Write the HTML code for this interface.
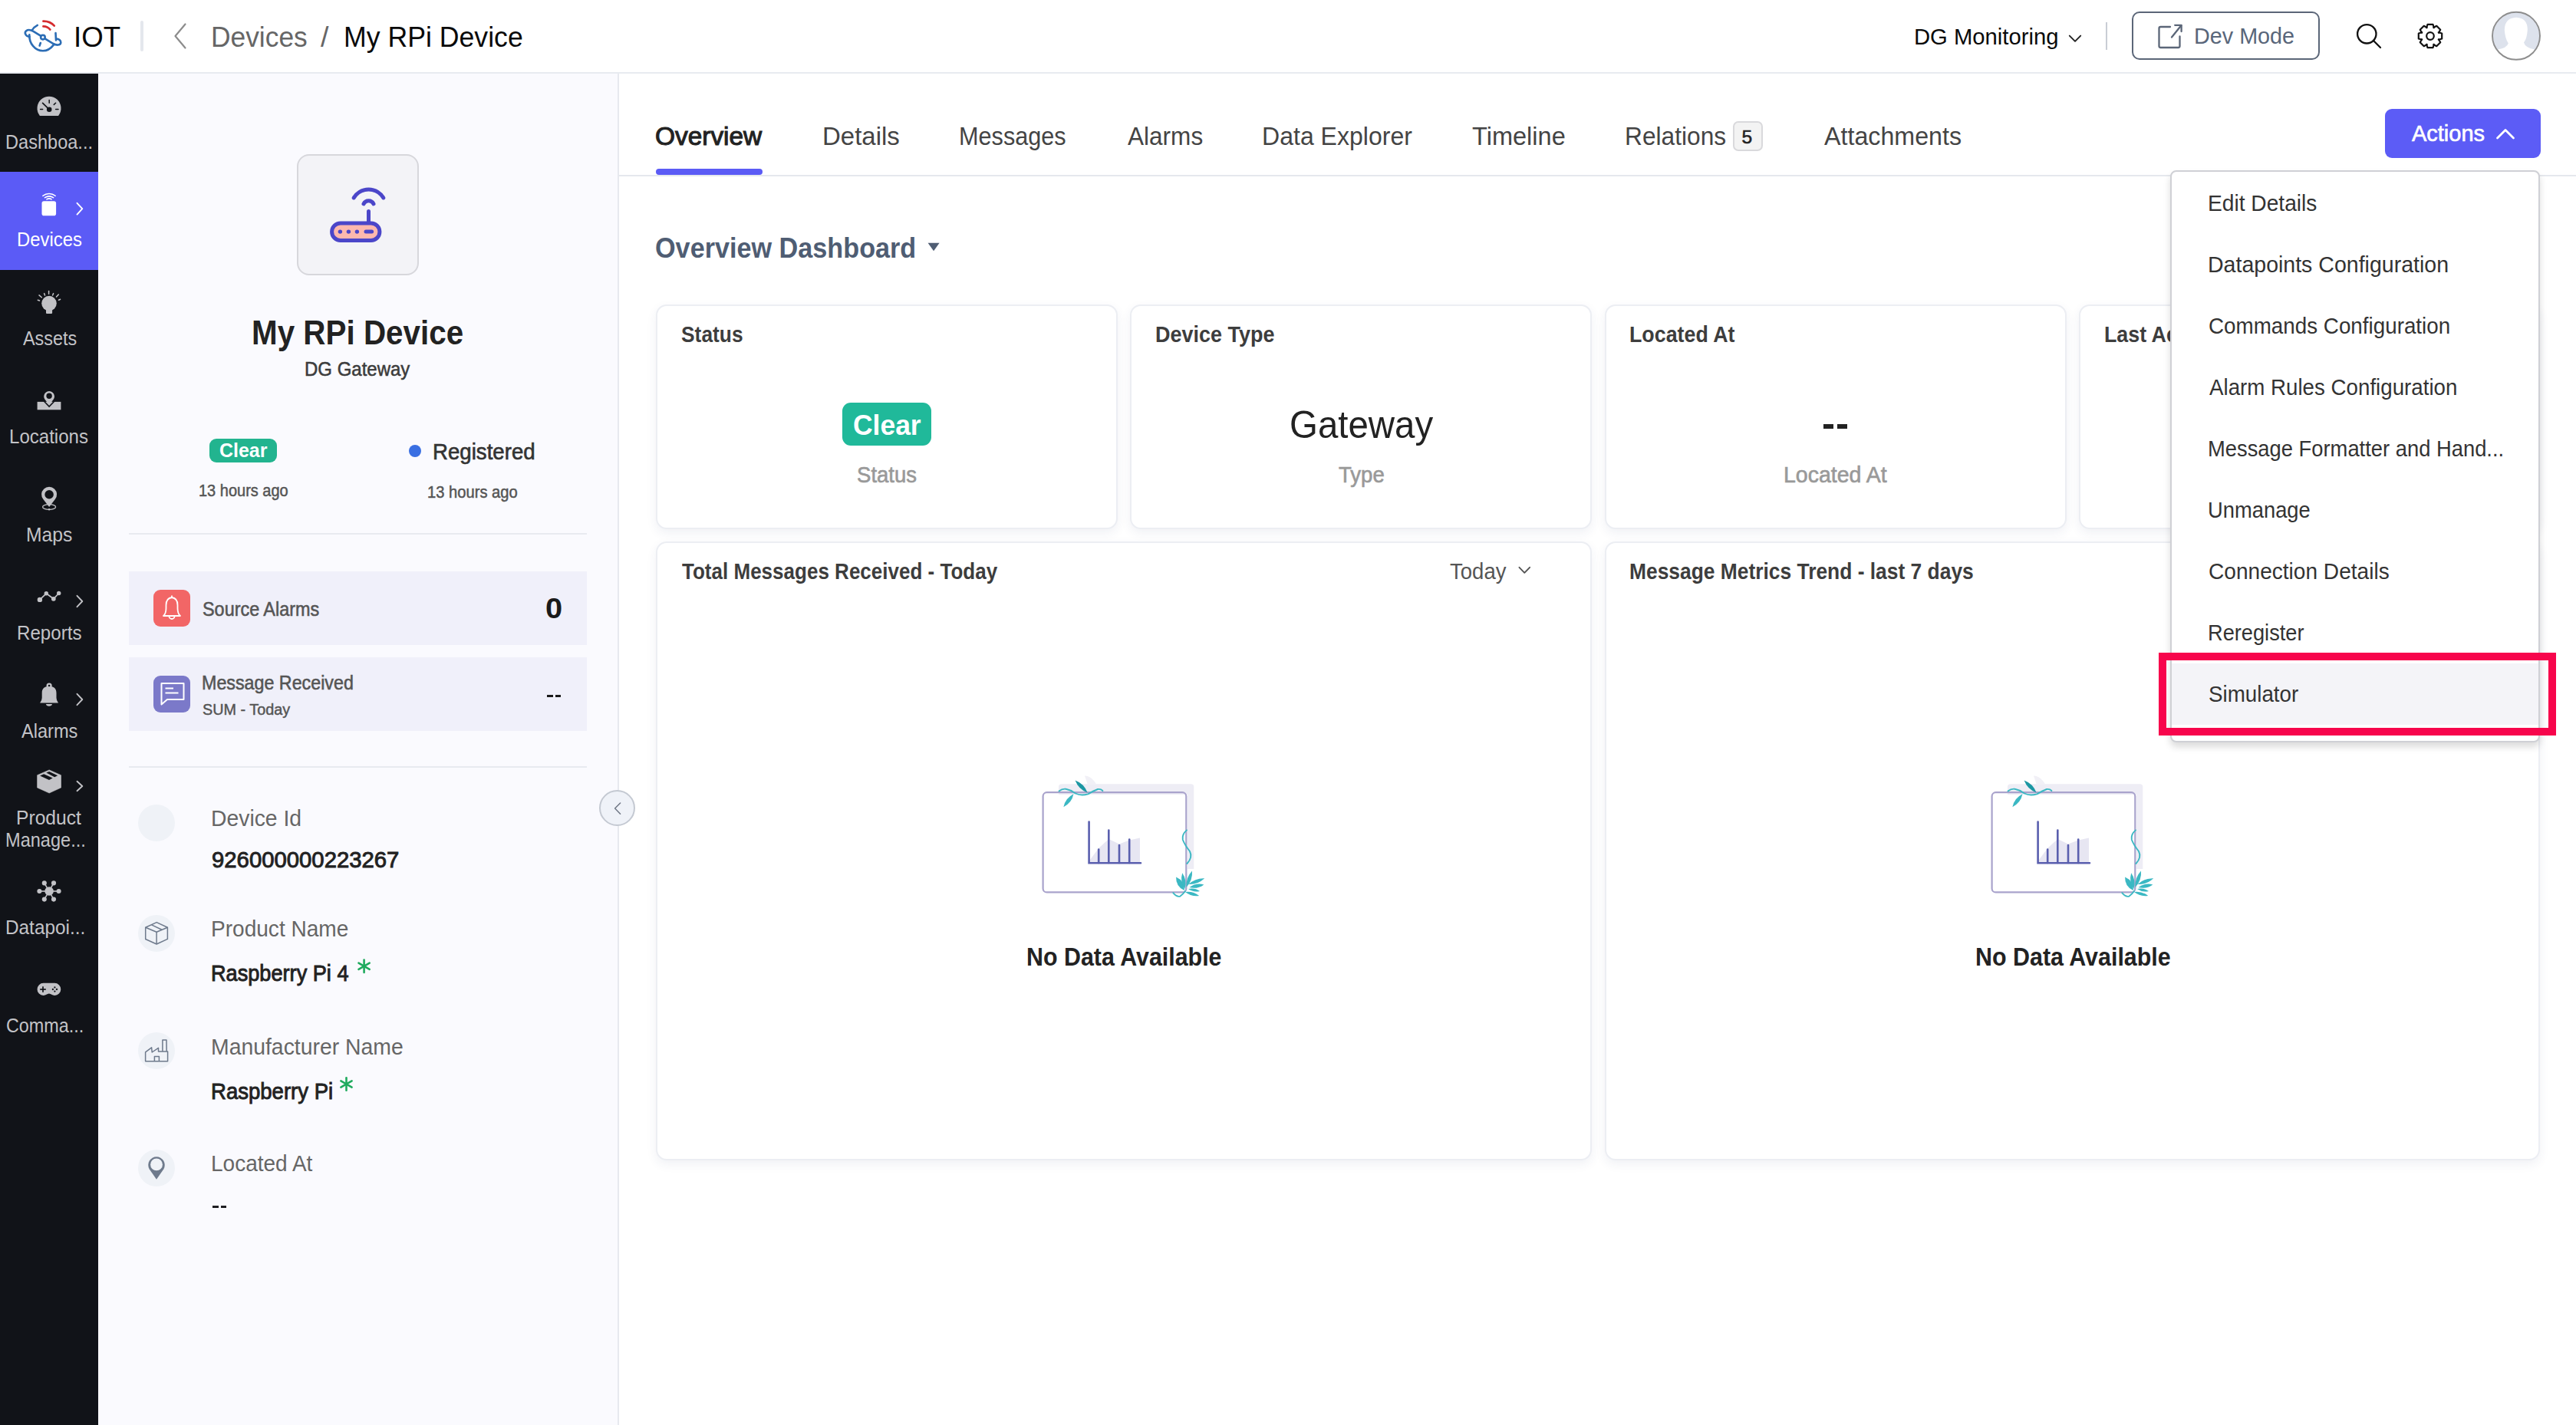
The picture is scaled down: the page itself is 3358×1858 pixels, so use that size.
<!DOCTYPE html><html><head><meta charset="utf-8"><title>IOT - My RPi Device</title><style>
html,body{margin:0;padding:0;}
body{width:3358px;height:1858px;overflow:hidden;position:relative;background:#ffffff;font-family:'Liberation Sans', sans-serif;}
.t{position:absolute;white-space:nowrap;transform-origin:0 0;}
svg{overflow:visible}
</style></head><body>
<div style="position:absolute;left:0px;top:0px;width:3358px;height:94px;background:#ffffff;"></div>
<div style="position:absolute;left:0px;top:94px;width:3358px;height:2px;background:#e8ebf0;"></div>
<div style="position:absolute;left:0px;top:96px;width:128px;height:1762px;background:#111318;"></div>
<div style="position:absolute;left:0px;top:224px;width:128px;height:128px;background:#5b5bf6;"></div>
<div style="position:absolute;left:128px;top:96px;width:677px;height:1762px;background:#fafafe;"></div>
<div style="position:absolute;left:805px;top:96px;width:2px;height:1762px;background:#e7e9ef;"></div>
<div style="position:absolute;left:807px;top:228px;width:2551px;height:2px;background:#e5e8ed;"></div>
<div style="position:absolute;left:855px;top:220px;width:139px;height:8px;background:#5b5bf5;border-radius:4px;"></div>
<svg style="position:absolute;left:25px;top:20px;" width="65" height="55" viewBox="25 20 65 55"><g fill="none" stroke="#2c6db5" stroke-width="2.6" stroke-linecap="round" stroke-linejoin="round">
<path d="M38.3 45.2 C37.8 57 46 66.3 55.9 66.3 C62 66.3 66.8 62.6 70 58.4"/>
<path d="M38.6 48 C33.2 47.3 31.3 42.6 34.2 40.2 C36.6 38.3 40.5 39.2 43.5 40.8 L53.3 46.9"/>
<path d="M58.6 50.4 L68.8 56.6 C73.2 59.2 78.8 59.6 79.3 55.6 C79.6 52.8 76.6 50.6 73.6 50.6"/>
<path d="M72.5 43 L73 52.4"/>
<circle cx="55.9" cy="48.6" r="2.8"/>
<path d="M41.6 39.6 Q44.3 35.2 48.8 32.9"/>
<path d="M51.6 59.6 L52.8 56"/>
</g>
<g fill="none" stroke="#d52b2e" stroke-width="2.6" stroke-linecap="round">
<path d="M56.4 27.6 Q65.2 27.4 70.8 33.6"/>
<path d="M56.4 34.4 Q61.8 34.2 65.4 38.6"/>
</g></svg>
<div style="position:absolute;left:183px;top:27px;width:4px;height:40px;background:#e4e7ed;border-radius:2px;"></div>
<svg style="position:absolute;left:220px;top:25px;" width="30" height="45" viewBox="220 25 30 45"><path d="M241.5 31.5 L228.5 47 L241.5 62.5" fill="none" stroke="#8c8c8c" stroke-width="2.2" stroke-linecap="round" stroke-linejoin="round"/></svg>
<svg style="position:absolute;left:2690px;top:40px;" width="30" height="20" viewBox="2690 40 30 20"><path d="M2697.8 46.6 L2705 53.8 L2712.2 46.6" fill="none" stroke="#222" stroke-width="1.9" stroke-linecap="round" stroke-linejoin="round"/></svg>
<div style="position:absolute;left:2745px;top:29px;width:2px;height:36px;background:#c9cdd5;"></div>
<div style="position:absolute;left:2779px;top:15px;width:245px;height:63px;box-sizing:border-box;border:2.5px solid #5b6678;border-radius:10px;"></div>
<svg style="position:absolute;left:2808px;top:28px;" width="42" height="40" viewBox="2808 28 42 40"><g fill="none" stroke="#5b6678" stroke-width="2.3" stroke-linecap="round" stroke-linejoin="round">
<path d="M2829 35 L2816.5 35 Q2814.5 35 2814.5 37 L2814.5 60 Q2814.5 62 2816.5 62 L2839.5 62 Q2841.5 62 2841.5 60 L2841.5 47.5"/>
<path d="M2831 48.5 L2843.3 33.2"/><path d="M2835.2 32.8 L2843.6 32.8 L2843.6 41"/></g></svg>
<svg style="position:absolute;left:3066px;top:26px;" width="44" height="42" viewBox="3066 26 44 42"><g fill="none" stroke="#111" stroke-width="2.3" stroke-linecap="round"><circle cx="3085.3" cy="44.3" r="12.2"/><path d="M3094 53 L3103 62"/></g></svg>
<svg style="position:absolute;left:3148px;top:27px;" width="40" height="41" viewBox="3148 27 40 41"><g fill="none" stroke="#111" stroke-width="2.2" stroke-linejoin="round"><path d="M3163.20 36.22 L3164.49 31.80 L3171.51 31.80 L3172.80 36.22 L3172.23 35.98 L3176.27 33.77 L3181.23 38.73 L3179.02 42.77 L3178.78 42.20 L3183.20 43.49 L3183.20 50.51 L3178.78 51.80 L3179.02 51.23 L3181.23 55.27 L3176.27 60.23 L3172.23 58.02 L3172.80 57.78 L3171.51 62.20 L3164.49 62.20 L3163.20 57.78 L3163.77 58.02 L3159.73 60.23 L3154.77 55.27 L3156.98 51.23 L3157.22 51.80 L3152.80 50.51 L3152.80 43.49 L3157.22 42.20 L3156.98 42.77 L3154.77 38.73 L3159.73 33.77 L3163.77 35.98 Z"/><circle cx="3168" cy="47" r="4.8"/></g></svg>
<svg style="position:absolute;left:3245px;top:12px;" width="72" height="70" viewBox="3245 12 72 70"><defs><clipPath id="avc"><circle cx="3280" cy="46.8" r="30.6"/></clipPath></defs>
<circle cx="3280" cy="46.8" r="31" fill="#dde2ec"/>
<g clip-path="url(#avc)"><path d="M3245 67 L3256 64.5 Q3268 62.5 3269.8 56.5 Q3265.5 50 3264.8 39 Q3265 23.5 3280 22.8 Q3295 23.5 3294.8 39 Q3294.2 50 3290 55.5 Q3292 62.5 3305 64.8 L3318 67 L3318 84 L3245 84 Z" fill="#ffffff"/></g>
<circle cx="3280" cy="46.8" r="31" fill="none" stroke="#8d8d8d" stroke-width="1.9"/></svg>
<svg style="position:absolute;left:46px;top:122px;" width="36" height="32" viewBox="46 122 36 32"><path d="M51.9 150.9 A15.5 15.5 0 1 1 76.1 150.9 Z" fill="#c2c2c6"/>
<g stroke="#111318" stroke-width="1.5" stroke-linecap="round"><path d="M52.6 142.6 L55.6 142.6"/><path d="M72.6 142.6 L76 142.6"/><path d="M64.2 130.6 L64.2 134.2"/><path d="M70.3 136.4 L72.6 134.2"/><path d="M55.6 134.4 L63.8 142.4" stroke-width="1.7"/></g>
<circle cx="64.2" cy="142.8" r="3.3" fill="#111318"/></svg>
<svg style="position:absolute;left:50px;top:248px;" width="30" height="36" viewBox="50 248 30 36"><g fill="none" stroke="#fff" stroke-width="1.6" stroke-linecap="round"><path d="M55.9 255.3 A13 13 0 0 1 72.1 255.3"/><path d="M58.5 257.7 A9.8 9.8 0 0 1 69.5 257.7"/><path d="M60.9 259.9 A5.6 5.6 0 0 1 67.1 259.9"/></g>
<rect x="54.5" y="262.2" width="18.6" height="19" rx="2.8" fill="#fff"/></svg>
<svg style="position:absolute;left:96px;top:260px;" width="16" height="24" viewBox="96 260 16 24"><path d="M100.5 264.8 L107.3 272.2 L100.5 279.6" fill="none" stroke="#fff" stroke-width="1.9" stroke-linecap="round" stroke-linejoin="round"/></svg>
<svg style="position:absolute;left:44px;top:372px;" width="40" height="40" viewBox="44 372 40 40"><circle cx="64" cy="395.6" r="9.8" fill="#c2c2c6"/><rect x="60" y="400" width="8.1" height="8.9" rx="0.8" fill="#c2c2c6"/>
<g stroke="#c2c2c6" stroke-width="1.5" stroke-linecap="round"><path d="M63.6 379.6 L63.6 383.2"/><path d="M57.6 382.6 L58.5 385"/><path d="M69.6 382.6 L68.6 385"/><path d="M51 384.9 L54.3 387.8"/><path d="M76.3 384 L73.5 387"/><path d="M49.3 391.2 L51.5 392"/><path d="M78.6 390.3 L76.5 391.3"/></g></svg>
<svg style="position:absolute;left:46px;top:506px;" width="36" height="32" viewBox="46 506 36 32"><rect x="48.6" y="523.9" width="30.8" height="10.4" fill="#c2c2c6"/>
<path d="M57.2 523 L64.1 530 L71 523" fill="none" stroke="#111318" stroke-width="1.6"/>
<path d="M64.1 527.9 L58.3 520.6 A6.85 6.85 0 1 1 69.9 520.6 Z" fill="#c2c2c6"/><circle cx="64.1" cy="516.2" r="3.7" fill="#111318"/></svg>
<svg style="position:absolute;left:50px;top:630px;" width="30" height="40" viewBox="50 630 30 40"><ellipse cx="64.1" cy="661" rx="8.5" ry="3.3" fill="none" stroke="#c2c2c6" stroke-width="1.3"/>
<path d="M64.1 660.9 L56.4 651.1 A10 10 0 1 1 71.8 651.1 Z" fill="#c2c2c6"/><circle cx="64.1" cy="644.7" r="5.75" fill="#111318"/><circle cx="64.1" cy="664.2" r="1.3" fill="#c2c2c6"/></svg>
<svg style="position:absolute;left:46px;top:766px;" width="36" height="24" viewBox="46 766 36 24"><path d="M51.9 781.9 L60.3 773.8 L69.8 780.8 L76.7 773.5" fill="none" stroke="#c2c2c6" stroke-width="1.7" stroke-linejoin="round"/>
<g fill="#c2c2c6"><circle cx="51.9" cy="781.9" r="3.2"/><circle cx="60.3" cy="773.8" r="2.7"/><circle cx="69.8" cy="780.8" r="2.9"/><circle cx="76.7" cy="773.5" r="2.7"/></g></svg>
<svg style="position:absolute;left:96px;top:772px;" width="16" height="24" viewBox="96 772 16 24"><path d="M100.5 776.8 L107.3 784.0 L100.5 791.2" fill="none" stroke="#c2c2c6" stroke-width="1.9" stroke-linecap="round" stroke-linejoin="round"/></svg>
<svg style="position:absolute;left:48px;top:886px;" width="32" height="38" viewBox="48 886 32 38"><path d="M52.1 916.5 Q54.7 913 54.7 910 L54.7 903.5 C54.7 897.5 58.5 894.8 64.1 894.8 C69.7 894.8 73.5 897.5 73.5 903.5 L73.5 910 Q73.5 913 76 916.5 Z" fill="#c2c2c6"/>
<circle cx="64.1" cy="894" r="3.6" fill="#c2c2c6"/><circle cx="64.1" cy="894" r="1.3" fill="#111318"/><path d="M59.9 918.1 A4.1 3.2 0 0 0 68 918.1 Z" fill="#c2c2c6"/></svg>
<svg style="position:absolute;left:96px;top:900px;" width="16" height="24" viewBox="96 900 16 24"><path d="M100.5 904.8 L107.3 912.0 L100.5 919.2" fill="none" stroke="#c2c2c6" stroke-width="1.9" stroke-linecap="round" stroke-linejoin="round"/></svg>
<svg style="position:absolute;left:46px;top:1000px;" width="36" height="38" viewBox="46 1000 36 38"><path d="M64.2 1003.9 L79.5 1010.7 L79.5 1027 L64.2 1034 L48.6 1027 L48.6 1010.7 Z" fill="#c2c2c6" stroke="#c2c2c6" stroke-width="0.6" stroke-linejoin="round"/>
<path d="M52.1 1011.5 L57.2 1009.3 L68.7 1014.5 L64 1016.9 Z" fill="#111318"/><path d="M60.3 1007.4 L64.2 1005.9 L75.2 1011.2 L71.2 1013.2 Z" fill="#111318"/></svg>
<svg style="position:absolute;left:96px;top:1014px;" width="16" height="22" viewBox="96 1014 16 22"><path d="M100.5 1018.8 L107.3 1025.0 L100.5 1031.2" fill="none" stroke="#c2c2c6" stroke-width="1.9" stroke-linecap="round" stroke-linejoin="round"/></svg>
<svg style="position:absolute;left:46px;top:1144px;" width="36" height="36" viewBox="46 1144 36 36"><g stroke="#c2c2c6" stroke-width="1.6"><path d="M51.4 1162 L76.6 1162"/><path d="M57.8 1151.4 L70 1172.6"/><path d="M70 1151.4 L57.8 1172.6"/></g>
<g fill="#c2c2c6"><circle cx="64.1" cy="1162" r="5.8"/><circle cx="51.4" cy="1162" r="3.05"/><circle cx="76.6" cy="1162" r="3.05"/><circle cx="57.8" cy="1151.4" r="3.05"/><circle cx="70" cy="1151.4" r="3.05"/><circle cx="57.8" cy="1172.6" r="3.05"/><circle cx="70" cy="1172.6" r="3.05"/></g></svg>
<svg style="position:absolute;left:46px;top:1278px;" width="36" height="24" viewBox="46 1278 36 24"><path d="M56.6 1281.8 L71.2 1281.8 A8.1 8.1 0 0 1 71.2 1298 C68 1298 66.5 1295.5 63.9 1295.5 C61.3 1295.5 59.8 1298 56.6 1298 A8.1 8.1 0 0 1 56.6 1281.8 Z" fill="#c2c2c6"/>
<g stroke="#111318" stroke-width="1.7"><path d="M52.2 1290 L59.8 1290"/><path d="M56 1286.2 L56 1293.8"/></g>
<g fill="#111318"><circle cx="71.4" cy="1287.4" r="1.15"/><circle cx="71.4" cy="1292.6" r="1.15"/><circle cx="68.9" cy="1290" r="1.15"/><circle cx="74" cy="1290" r="1.15"/></g></svg>
<div style="position:absolute;left:387px;top:201px;width:159px;height:158px;box-sizing:border-box;background:#f3f3f7;border:2px solid #d7d7dc;border-radius:16px;"></div>
<svg style="position:absolute;left:425px;top:230px;" width="80" height="90" viewBox="425 230 80 90"><g fill="none" stroke="#4b46c9" stroke-width="5" stroke-linecap="round">
<rect x="432.6" y="290.9" width="62.3" height="22.5" rx="11.2" fill="#fdb8ae"/>
<path d="M480.5 275.6 L480.5 290"/><path d="M474 265.8 A7.2 7.2 0 0 1 487 265.8"/><path d="M461.2 258 A22.4 22.4 0 0 1 499.8 258"/>
<path d="M477 302.1 L484.6 302.1"/></g>
<g fill="#4b46c9"><circle cx="443.4" cy="302.1" r="2.7"/><circle cx="454.4" cy="302.1" r="2.7"/><circle cx="465.4" cy="302.1" r="2.7"/></g></svg>
<div style="position:absolute;left:273px;top:572px;width:88px;height:31px;background:#22b48f;border-radius:9px;"></div>
<div style="position:absolute;left:533px;top:580px;width:16px;height:16px;border-radius:50%;background:#3a6fe2;"></div>
<div style="position:absolute;left:168px;top:695px;width:597px;height:2px;background:#e8eaf0;"></div>
<div style="position:absolute;left:168px;top:745px;width:597px;height:96px;background:#f0f0fa;"></div>
<div style="position:absolute;left:200px;top:769px;width:48px;height:48px;background:#f26666;border-radius:9px;"></div>
<svg style="position:absolute;left:205px;top:773px;" width="40" height="42" viewBox="205 773 40 42"><g fill="none" stroke="#fff" stroke-width="1.8" stroke-linejoin="round"><path d="M213 803 Q216.5 800 216.5 793 L216.5 789 Q216.5 780 224 779 Q231.5 780 231.5 789 L231.5 793 Q231.5 800 235 803 Z"/><path d="M220.5 803.5 A3.5 3.5 0 0 0 227.5 803.5"/><path d="M224 776.5 L224 779"/></g></svg>
<div style="position:absolute;left:168px;top:857px;width:597px;height:96px;background:#f0f0fa;"></div>
<div style="position:absolute;left:200px;top:881px;width:48px;height:48px;background:#7b79c9;border-radius:9px;"></div>
<svg style="position:absolute;left:205px;top:885px;" width="40" height="42" viewBox="205 885 40 42"><g fill="none" stroke="#fff" stroke-width="2" stroke-linejoin="round"><path d="M210.5 891 L239.5 891 L239.5 912 L218 912 L210.5 918.5 Z"/></g>
<g stroke="#fff" stroke-width="2"><path d="M215.5 897.5 L226 897.5"/><path d="M215.5 903.5 L232.5 903.5"/></g></svg>
<div style="position:absolute;left:713px;top:906px;width:7.600000000000023px;height:3px;background:#1a1a1a;"></div>
<div style="position:absolute;left:724px;top:906px;width:7px;height:3px;background:#1a1a1a;"></div>
<div style="position:absolute;left:168px;top:999px;width:597px;height:2px;background:#e8eaf0;"></div>
<div style="position:absolute;left:180px;top:1049px;width:48px;height:48px;border-radius:50%;background:#eff2f7;"></div>
<div style="position:absolute;left:180px;top:1193px;width:48px;height:48px;border-radius:50%;background:#eff2f7;"></div>
<div style="position:absolute;left:180px;top:1346px;width:48px;height:48px;border-radius:50%;background:#eff2f7;"></div>
<div style="position:absolute;left:180px;top:1499px;width:48px;height:48px;border-radius:50%;background:#eff2f7;"></div>
<svg style="position:absolute;left:186px;top:1198px;" width="36" height="38" viewBox="186 1198 36 38"><g fill="none" stroke="#6e7a8c" stroke-width="1.5" stroke-linejoin="round"><path d="M204.2 1202.6 L218.4 1209.3 L218.4 1224.4 L204.1 1231 L189.7 1224.5 L189.7 1209.3 Z"/><path d="M189.7 1209.3 L204.1 1215.2 L218.4 1209.3"/><path d="M204.1 1215.2 L204.1 1231"/><path d="M197.6 1205.9 L211 1212.2"/></g></svg>
<svg style="position:absolute;left:184px;top:1350px;" width="40" height="40" viewBox="184 1350 40 40"><g fill="none" stroke="#6e7a8c" stroke-width="1.5" stroke-linejoin="round"><path d="M189.6 1383.7 L189.6 1371.9 L197.6 1365.8 L198.2 1372 L206.5 1366.4 L206.5 1370.9 L218.6 1370.9 L218.6 1383.7 Z"/><path d="M211.9 1370.9 L211.9 1356 L217 1356 L217.2 1370.9"/><path d="M201.4 1383.7 L201.4 1377.5 L207.4 1377.5 L207.4 1383.7"/></g></svg>
<svg style="position:absolute;left:190px;top:1504px;" width="28" height="38" viewBox="190 1504 28 38"><path d="M204 1537.8 L194.6 1524.2 A10.75 10.75 0 1 1 213.4 1524.2 Z" fill="#6e7a8c"/><circle cx="204" cy="1518.4" r="7.9" fill="#eff2f7"/></svg>
<div style="position:absolute;left:277px;top:1572px;width:8px;height:3px;background:#1e1e22;"></div>
<div style="position:absolute;left:288px;top:1572px;width:7.199999999999989px;height:3px;background:#1e1e22;"></div>
<svg style="position:absolute;left:462px;top:1247px;" width="24" height="24" viewBox="462 1247 24 24"><g stroke="#1faa5e" stroke-width="2.6" stroke-linecap="round"><path d="M474.60 1251.60 L474.60 1268.00"/><path d="M467.50 1255.70 L481.70 1263.90"/><path d="M467.50 1263.90 L481.70 1255.70"/></g></svg>
<svg style="position:absolute;left:439px;top:1401px;" width="24" height="24" viewBox="439 1401 24 24"><g stroke="#1faa5e" stroke-width="2.6" stroke-linecap="round"><path d="M451.50 1405.30 L451.50 1421.70"/><path d="M444.40 1409.40 L458.60 1417.60"/><path d="M444.40 1417.60 L458.60 1409.40"/></g></svg>
<div style="position:absolute;left:781px;top:1030px;width:47px;height:47px;box-sizing:border-box;border-radius:50%;background:#eff2f8;border:2px solid #c4c9d2;"></div>
<svg style="position:absolute;left:796px;top:1042px;" width="20" height="24" viewBox="796 1042 20 24"><path d="M808.6 1047 L801.6 1054 L808.6 1061.2" fill="none" stroke="#6f7785" stroke-width="1.5" stroke-linecap="round" stroke-linejoin="round"/></svg>
<div style="position:absolute;left:2259px;top:158px;width:39px;height:39px;box-sizing:border-box;background:#f3f3f3;border:2px solid #d9d9dc;border-radius:7px;"></div>
<div style="position:absolute;left:3109px;top:142px;width:203px;height:64px;background:#5c5cf6;border-radius:9px;"></div>
<svg style="position:absolute;left:3250px;top:162px;" width="34" height="24" viewBox="3250 162 34 24"><path d="M3255.5 180 L3266 169.5 L3276.5 180" fill="none" stroke="#fff" stroke-width="2.8" stroke-linecap="round" stroke-linejoin="round"/></svg>
<svg style="position:absolute;left:1205px;top:312px;" width="24" height="20" viewBox="1205 312 24 20"><path d="M1209.6 316.8 L1224.6 316.8 L1217.1 327.3 Z" fill="#4f5d73"/></svg>
<div style="position:absolute;left:855px;top:397px;width:602px;height:293px;box-sizing:border-box;background:#fff;border:2px solid #eceef3;border-radius:14px;box-shadow:0 5px 14px rgba(40,60,110,0.07);"></div>
<div style="position:absolute;left:1473px;top:397px;width:602px;height:293px;box-sizing:border-box;background:#fff;border:2px solid #eceef3;border-radius:14px;box-shadow:0 5px 14px rgba(40,60,110,0.07);"></div>
<div style="position:absolute;left:2092px;top:397px;width:602px;height:293px;box-sizing:border-box;background:#fff;border:2px solid #eceef3;border-radius:14px;box-shadow:0 5px 14px rgba(40,60,110,0.07);"></div>
<div style="position:absolute;left:2710px;top:397px;width:601px;height:293px;box-sizing:border-box;background:#fff;border:2px solid #eceef3;border-radius:14px;box-shadow:0 5px 14px rgba(40,60,110,0.07);"></div>
<div style="position:absolute;left:855px;top:706px;width:1220px;height:807px;box-sizing:border-box;background:#fff;border:2px solid #eceef3;border-radius:14px;box-shadow:0 5px 14px rgba(40,60,110,0.07);"></div>
<div style="position:absolute;left:2092px;top:706px;width:1219px;height:807px;box-sizing:border-box;background:#fff;border:2px solid #eceef3;border-radius:14px;box-shadow:0 5px 14px rgba(40,60,110,0.07);"></div>
<div style="position:absolute;left:1098px;top:525px;width:116px;height:56px;background:#20b99a;border-radius:11px;"></div>
<div style="position:absolute;left:2377.4px;top:553.3px;width:12.400000000000091px;height:5.7000000000000455px;background:#222;"></div>
<div style="position:absolute;left:2395.3px;top:553.3px;width:12.299999999999727px;height:5.7000000000000455px;background:#222;"></div>
<svg style="position:absolute;left:1975px;top:735px;" width="24" height="18" viewBox="1975 735 24 18"><path d="M1980.5 739.8 L1987.3 746.8 L1994.1 739.8" fill="none" stroke="#555" stroke-width="1.9" stroke-linecap="round" stroke-linejoin="round"/></svg>
<svg style="position:absolute;left:1350px;top:1005px;" width="230" height="180" viewBox="1350 1005 230 180"><g transform="translate(0 0)">
<path d="M1380 1036 L1380 1026 Q1380 1022.3 1384 1022.3 L1552.5 1022.3 Q1556.3 1022.3 1556.3 1026 L1556.3 1133 L1548 1133 L1548 1036 Z" fill="#eeedf5"/>
<path d="M1417.6 1022.3 L1414 1011.5 Q1422 1011 1429 1022.3 Z" fill="#f1f0f6"/>
<path d="M1421 1121 L1432.2 1106 L1445.3 1094 L1459 1100.5 L1472.2 1095.5 L1486 1092.5 L1486 1124 L1421 1124 Z" fill="#e7e6f2"/>
<rect x="1359.6" y="1033.2" width="186.7" height="130.2" rx="5" fill="none" stroke="#a9a3cc" stroke-width="2.2"/>
<g fill="none" stroke="#5a5fae" stroke-width="2.6" stroke-linecap="round"><path d="M1419.6 1071.5 L1419.6 1125.3 L1487 1125.3"/><path d="M1432.2 1107.5 L1432.2 1125"/><path d="M1445.3 1082.5 L1445.3 1125"/><path d="M1459 1102 L1459 1125"/><path d="M1472.2 1094.5 L1472.2 1125"/></g>
<g fill="none" stroke="#3bb8c3" stroke-width="1.9" stroke-linecap="round"><path d="M1380.5 1031.5 Q1385 1028 1389.5 1028.8 Q1396 1030 1402 1034.5 Q1409 1038 1418.4 1035.3 Q1426 1031 1431 1029 Q1435 1028.5 1437.4 1031"/>
<path d="M1547 1082.4 Q1540.5 1088 1541.8 1094.7 Q1544 1101 1551 1110 Q1555 1118 1547.4 1126"/><path d="M1529.3 1164.2 Q1534 1170 1538.5 1168.6 Q1542 1166 1545 1162"/></g>
<path d="M1417.6 1033.6 Q1413.3 1021.9 1401.6 1017.6 Q1405.9 1029.3 1417.6 1033.6 Z" fill="#1b97a3"/><path d="M1399.5 1035.3 Q1388.8 1040.6 1386.4 1052.2 Q1397.1 1046.9 1399.5 1035.3 Z" fill="#3bb8c3"/><path d="M1544.0 1161.0 Q1544.5 1148.5 1533.1 1143.4 Q1532.6 1155.9 1544.0 1161.0 Z" fill="#3bb8c3"/><path d="M1544.5 1159.0 Q1547.8 1147.9 1541.2 1138.3 Q1537.9 1149.4 1544.5 1159.0 Z" fill="#3bb8c3"/><path d="M1546.5 1157.0 Q1555.0 1148.0 1554.0 1135.6 Q1545.5 1144.6 1546.5 1157.0 Z" fill="#3bb8c3"/><path d="M1549.5 1153.0 Q1561.5 1153.5 1570.2 1145.3 Q1558.2 1144.8 1549.5 1153.0 Z" fill="#3bb8c3"/><path d="M1550.5 1157.0 Q1560.8 1159.7 1569.4 1153.4 Q1559.1 1150.7 1550.5 1157.0 Z" fill="#3bb8c3"/><path d="M1549.0 1159.0 Q1555.8 1163.9 1564.0 1161.9 Q1557.2 1157.0 1549.0 1159.0 Z" fill="#3bb8c3"/><path d="M1545.0 1163.0 Q1553.0 1169.4 1563.2 1168.0 Q1555.2 1161.6 1545.0 1163.0 Z" fill="#3bb8c3"/>
</g></svg>
<svg style="position:absolute;left:2586.7px;top:1005px;" width="230" height="180" viewBox="2586.7 1005 230 180"><g transform="translate(1236.7 0)">
<path d="M1380 1036 L1380 1026 Q1380 1022.3 1384 1022.3 L1552.5 1022.3 Q1556.3 1022.3 1556.3 1026 L1556.3 1133 L1548 1133 L1548 1036 Z" fill="#eeedf5"/>
<path d="M1417.6 1022.3 L1414 1011.5 Q1422 1011 1429 1022.3 Z" fill="#f1f0f6"/>
<path d="M1421 1121 L1432.2 1106 L1445.3 1094 L1459 1100.5 L1472.2 1095.5 L1486 1092.5 L1486 1124 L1421 1124 Z" fill="#e7e6f2"/>
<rect x="1359.6" y="1033.2" width="186.7" height="130.2" rx="5" fill="none" stroke="#a9a3cc" stroke-width="2.2"/>
<g fill="none" stroke="#5a5fae" stroke-width="2.6" stroke-linecap="round"><path d="M1419.6 1071.5 L1419.6 1125.3 L1487 1125.3"/><path d="M1432.2 1107.5 L1432.2 1125"/><path d="M1445.3 1082.5 L1445.3 1125"/><path d="M1459 1102 L1459 1125"/><path d="M1472.2 1094.5 L1472.2 1125"/></g>
<g fill="none" stroke="#3bb8c3" stroke-width="1.9" stroke-linecap="round"><path d="M1380.5 1031.5 Q1385 1028 1389.5 1028.8 Q1396 1030 1402 1034.5 Q1409 1038 1418.4 1035.3 Q1426 1031 1431 1029 Q1435 1028.5 1437.4 1031"/>
<path d="M1547 1082.4 Q1540.5 1088 1541.8 1094.7 Q1544 1101 1551 1110 Q1555 1118 1547.4 1126"/><path d="M1529.3 1164.2 Q1534 1170 1538.5 1168.6 Q1542 1166 1545 1162"/></g>
<path d="M1417.6 1033.6 Q1413.3 1021.9 1401.6 1017.6 Q1405.9 1029.3 1417.6 1033.6 Z" fill="#1b97a3"/><path d="M1399.5 1035.3 Q1388.8 1040.6 1386.4 1052.2 Q1397.1 1046.9 1399.5 1035.3 Z" fill="#3bb8c3"/><path d="M1544.0 1161.0 Q1544.5 1148.5 1533.1 1143.4 Q1532.6 1155.9 1544.0 1161.0 Z" fill="#3bb8c3"/><path d="M1544.5 1159.0 Q1547.8 1147.9 1541.2 1138.3 Q1537.9 1149.4 1544.5 1159.0 Z" fill="#3bb8c3"/><path d="M1546.5 1157.0 Q1555.0 1148.0 1554.0 1135.6 Q1545.5 1144.6 1546.5 1157.0 Z" fill="#3bb8c3"/><path d="M1549.5 1153.0 Q1561.5 1153.5 1570.2 1145.3 Q1558.2 1144.8 1549.5 1153.0 Z" fill="#3bb8c3"/><path d="M1550.5 1157.0 Q1560.8 1159.7 1569.4 1153.4 Q1559.1 1150.7 1550.5 1157.0 Z" fill="#3bb8c3"/><path d="M1549.0 1159.0 Q1555.8 1163.9 1564.0 1161.9 Q1557.2 1157.0 1549.0 1159.0 Z" fill="#3bb8c3"/><path d="M1545.0 1163.0 Q1553.0 1169.4 1563.2 1168.0 Q1555.2 1161.6 1545.0 1163.0 Z" fill="#3bb8c3"/>
</g></svg>
<div class="t" style="left:95.68px;top:30.00px;font-size:37.68px;line-height:37.68px;color:#0a0a0a;transform:scaleX(0.9729);">IOT</div>
<div class="t" style="left:275.18px;top:30.00px;font-size:37.68px;line-height:37.68px;color:#666666;transform:scaleX(0.9385);">Devices</div>
<div class="t" style="left:418.00px;top:30.00px;font-size:37.68px;line-height:37.68px;color:#666666;">/</div>
<div class="t" style="left:448.16px;top:30.00px;font-size:37.68px;line-height:37.68px;color:#0a0a0a;transform:scaleX(0.9463);">My RPi Device</div>
<div class="t" style="left:2494.79px;top:34.00px;font-size:29.13px;line-height:29.13px;color:#0a0a0a;transform:scaleX(1.0038);">DG Monitoring</div>
<div class="t" style="left:2860.02px;top:33.00px;font-size:28.99px;line-height:28.99px;color:#59667a;transform:scaleX(0.9922);">Dev Mode</div>
<div class="t" style="left:7.41px;top:173.00px;font-size:24.93px;line-height:24.93px;color:#c3c3c7;transform:scaleX(0.9457);">Dashboa...</div>
<div class="t" style="left:21.79px;top:300.40px;font-size:24.93px;line-height:24.93px;color:#ffffff;transform:scaleX(0.9570);">Devices</div>
<div class="t" style="left:29.50px;top:429.00px;font-size:24.93px;line-height:24.93px;color:#c3c3c7;transform:scaleX(0.9378);">Assets</div>
<div class="t" style="left:12.37px;top:557.00px;font-size:24.93px;line-height:24.93px;color:#c3c3c7;transform:scaleX(0.9654);">Locations</div>
<div class="t" style="left:33.82px;top:685.00px;font-size:24.93px;line-height:24.93px;color:#c3c3c7;transform:scaleX(0.9897);">Maps</div>
<div class="t" style="left:22.06px;top:813.00px;font-size:24.93px;line-height:24.93px;color:#c3c3c7;transform:scaleX(0.9679);">Reports</div>
<div class="t" style="left:27.80px;top:941.00px;font-size:24.93px;line-height:24.93px;color:#c3c3c7;transform:scaleX(0.9468);">Alarms</div>
<div class="t" style="left:21.32px;top:1054.00px;font-size:24.93px;line-height:24.93px;color:#c3c3c7;transform:scaleX(0.9881);">Product</div>
<div class="t" style="left:7.41px;top:1083.00px;font-size:24.93px;line-height:24.93px;color:#c3c3c7;transform:scaleX(0.9458);">Manage...</div>
<div class="t" style="left:7.35px;top:1197.40px;font-size:24.93px;line-height:24.93px;color:#c3c3c7;transform:scaleX(0.9767);">Datapoi...</div>
<div class="t" style="left:8.36px;top:1325.00px;font-size:24.93px;line-height:24.93px;color:#c3c3c7;transform:scaleX(0.9371);">Comma...</div>
<div class="t" style="left:327.92px;top:412.70px;font-size:43.62px;line-height:43.62px;color:#222222;font-weight:bold;transform:scaleX(0.9262);">My RPi Device</div>
<div class="t" style="left:397.08px;top:468.50px;font-size:24.93px;line-height:24.93px;color:#3c3c3c;-webkit-text-stroke:0.55px #3c3c3c;transform:scaleX(0.9624);">DG Gateway</div>
<div class="t" style="left:286.00px;top:575.30px;font-size:24.93px;line-height:24.93px;color:#ffffff;font-weight:bold;">Clear</div>
<div class="t" style="left:259.08px;top:629.00px;font-size:21.74px;line-height:21.74px;color:#555555;-webkit-text-stroke:0.48px #555555;transform:scaleX(0.9200);">13 hours ago</div>
<div class="t" style="left:564.10px;top:575.00px;font-size:29.13px;line-height:29.13px;color:#333333;-webkit-text-stroke:0.64px #333333;transform:scaleX(0.9493);">Registered</div>
<div class="t" style="left:557.07px;top:631.00px;font-size:21.74px;line-height:21.74px;color:#555555;-webkit-text-stroke:0.48px #555555;transform:scaleX(0.9280);">13 hours ago</div>
<div class="t" style="left:263.86px;top:781.80px;font-size:24.93px;line-height:24.93px;color:#555555;-webkit-text-stroke:0.55px #555555;transform:scaleX(0.9391);">Source Alarms</div>
<div class="t" style="left:710.90px;top:776.00px;font-size:36.23px;line-height:36.23px;color:#1a1a1a;font-weight:bold;transform:scaleX(1.1000);">0</div>
<div class="t" style="left:262.93px;top:878.00px;font-size:24.93px;line-height:24.93px;color:#555555;-webkit-text-stroke:0.55px #555555;transform:scaleX(0.9335);">Message Received</div>
<div class="t" style="left:263.84px;top:915.00px;font-size:20.72px;line-height:20.72px;color:#555555;-webkit-text-stroke:0.46px #555555;transform:scaleX(0.9563);">SUM - Today</div>
<div class="t" style="left:275.05px;top:1052.80px;font-size:29.13px;line-height:29.13px;color:#666666;transform:scaleX(0.9729);">Device Id</div>
<div class="t" style="left:275.99px;top:1106.60px;font-size:29.13px;line-height:29.13px;color:#222222;-webkit-text-stroke:0.93px #222222;transform:scaleX(1.0058);">926000000223267</div>
<div class="t" style="left:275.07px;top:1197.00px;font-size:29.13px;line-height:29.13px;color:#666666;transform:scaleX(0.9634);">Product Name</div>
<div class="t" style="left:275.14px;top:1255.00px;font-size:29.13px;line-height:29.13px;color:#222222;-webkit-text-stroke:0.93px #222222;transform:scaleX(0.9319);">Raspberry Pi 4</div>
<div class="t" style="left:275.05px;top:1350.50px;font-size:29.13px;line-height:29.13px;color:#666666;transform:scaleX(0.9744);">Manufacturer Name</div>
<div class="t" style="left:275.11px;top:1409.00px;font-size:29.13px;line-height:29.13px;color:#222222;-webkit-text-stroke:0.93px #222222;transform:scaleX(0.9455);">Raspberry Pi</div>
<div class="t" style="left:275.08px;top:1503.00px;font-size:29.13px;line-height:29.13px;color:#666666;transform:scaleX(0.9618);">Located At</div>
<div class="t" style="left:853.99px;top:160.60px;font-size:33.19px;line-height:33.19px;color:#222222;-webkit-text-stroke:1.06px #222222;transform:scaleX(1.0072);">Overview</div>
<div class="t" style="left:1072.02px;top:161.40px;font-size:33.19px;line-height:33.19px;color:#444444;transform:scaleX(0.9938);">Details</div>
<div class="t" style="left:1250.23px;top:161.40px;font-size:33.19px;line-height:33.19px;color:#444444;transform:scaleX(0.9238);">Messages</div>
<div class="t" style="left:1470.00px;top:161.40px;font-size:33.19px;line-height:33.19px;color:#444444;transform:scaleX(0.9510);">Alarms</div>
<div class="t" style="left:1644.50px;top:161.40px;font-size:33.19px;line-height:33.19px;color:#444444;transform:scaleX(0.9663);">Data Explorer</div>
<div class="t" style="left:1919.02px;top:161.40px;font-size:33.19px;line-height:33.19px;color:#444444;transform:scaleX(0.9811);">Timeline</div>
<div class="t" style="left:2118.13px;top:161.40px;font-size:33.19px;line-height:33.19px;color:#444444;transform:scaleX(0.9552);">Relations</div>
<div class="t" style="left:2270.60px;top:167.30px;font-size:24.64px;line-height:24.64px;color:#222222;-webkit-text-stroke:0.54px #222222;">5</div>
<div class="t" style="left:2378.30px;top:161.40px;font-size:33.19px;line-height:33.19px;color:#444444;transform:scaleX(0.9710);">Attachments</div>
<div class="t" style="left:3143.50px;top:160.40px;font-size:29.13px;line-height:29.13px;color:#ffffff;-webkit-text-stroke:0.64px #ffffff;transform:scaleX(0.9947);">Actions</div>
<div class="t" style="left:854.07px;top:306.40px;font-size:36.81px;line-height:36.81px;color:#4f5d73;font-weight:bold;transform:scaleX(0.9295);">Overview Dashboard</div>
<div class="t" style="left:888.09px;top:421.80px;font-size:29.13px;line-height:29.13px;color:#3d3d3d;font-weight:bold;transform:scaleX(0.9057);">Status</div>
<div class="t" style="left:1506.15px;top:421.80px;font-size:29.13px;line-height:29.13px;color:#3d3d3d;font-weight:bold;transform:scaleX(0.9273);">Device Type</div>
<div class="t" style="left:2124.46px;top:421.80px;font-size:29.13px;line-height:29.13px;color:#3d3d3d;font-weight:bold;transform:scaleX(0.9204);">Located At</div>
<div class="t" style="left:2742.66px;top:421.80px;font-size:29.13px;line-height:29.13px;color:#3d3d3d;font-weight:bold;transform:scaleX(0.9200);">Last Activity</div>
<div class="t" style="left:1112.04px;top:536.00px;font-size:37.10px;line-height:37.10px;color:#ffffff;font-weight:bold;transform:scaleX(0.9560);">Clear</div>
<div class="t" style="left:1117.05px;top:604.50px;font-size:28.99px;line-height:28.99px;color:#999999;-webkit-text-stroke:0.64px #999999;transform:scaleX(0.9506);">Status</div>
<div class="t" style="left:1680.50px;top:529.90px;font-size:49.86px;line-height:49.86px;color:#222222;transform:scaleX(0.9513);">Gateway</div>
<div class="t" style="left:1745.00px;top:604.50px;font-size:28.99px;line-height:28.99px;color:#999999;-webkit-text-stroke:0.64px #999999;transform:scaleX(0.9516);">Type</div>
<div class="t" style="left:2325.04px;top:605.30px;font-size:28.99px;line-height:28.99px;color:#999999;-webkit-text-stroke:0.64px #999999;transform:scaleX(0.9822);">Located At</div>
<div class="t" style="left:889.00px;top:731.00px;font-size:29.13px;line-height:29.13px;color:#3d3d3d;font-weight:bold;transform:scaleX(0.8935);">Total Messages Received - Today</div>
<div class="t" style="left:1890.05px;top:731.00px;font-size:29.13px;line-height:29.13px;color:#555555;transform:scaleX(0.9455);">Today</div>
<div class="t" style="left:2124.19px;top:731.00px;font-size:29.13px;line-height:29.13px;color:#3d3d3d;font-weight:bold;transform:scaleX(0.9059);">Message Metrics Trend - last 7 days</div>
<div class="t" style="left:1338.17px;top:1231.00px;font-size:33.19px;line-height:33.19px;color:#222222;font-weight:bold;transform:scaleX(0.9164);">No Data Available</div>
<div class="t" style="left:2574.97px;top:1231.00px;font-size:33.19px;line-height:33.19px;color:#222222;font-weight:bold;transform:scaleX(0.9171);">No Data Available</div>
<div style="position:absolute;left:2829px;top:222px;width:482px;height:746px;box-sizing:border-box;background:#fff;border:2px solid #cfd0d5;border-radius:8px;box-shadow:0 6px 10px rgba(0,0,0,0.14);"></div>
<div style="position:absolute;left:2831px;top:865px;width:478px;height:80px;background:#f4f4f8;"></div>
<div class="t" style="left:2877.57px;top:250.80px;font-size:29.13px;line-height:29.13px;color:#333333;transform:scaleX(0.9667);">Edit Details</div>
<div class="t" style="left:2877.54px;top:331.00px;font-size:29.13px;line-height:29.13px;color:#333333;transform:scaleX(0.9795);">Datapoints Configuration</div>
<div class="t" style="left:2878.55px;top:410.70px;font-size:29.13px;line-height:29.13px;color:#333333;transform:scaleX(0.9543);">Commands Configuration</div>
<div class="t" style="left:2879.50px;top:491.30px;font-size:29.13px;line-height:29.13px;color:#333333;transform:scaleX(0.9512);">Alarm Rules Configuration</div>
<div class="t" style="left:2877.62px;top:571.30px;font-size:29.13px;line-height:29.13px;color:#333333;transform:scaleX(0.9391);">Message Formatter and Hand...</div>
<div class="t" style="left:2877.62px;top:651.20px;font-size:29.13px;line-height:29.13px;color:#333333;transform:scaleX(0.9388);">Unmanage</div>
<div class="t" style="left:2878.54px;top:731.00px;font-size:29.13px;line-height:29.13px;color:#333333;transform:scaleX(0.9642);">Connection Details</div>
<div class="t" style="left:2877.63px;top:811.00px;font-size:29.13px;line-height:29.13px;color:#333333;transform:scaleX(0.9341);">Reregister</div>
<div class="t" style="left:2878.55px;top:891.00px;font-size:29.13px;line-height:29.13px;color:#333333;transform:scaleX(0.9533);">Simulator</div>
<div style="position:absolute;left:2814px;top:851px;width:518px;height:108px;box-sizing:border-box;border:10px solid #f7054c;"></div>
</body></html>
